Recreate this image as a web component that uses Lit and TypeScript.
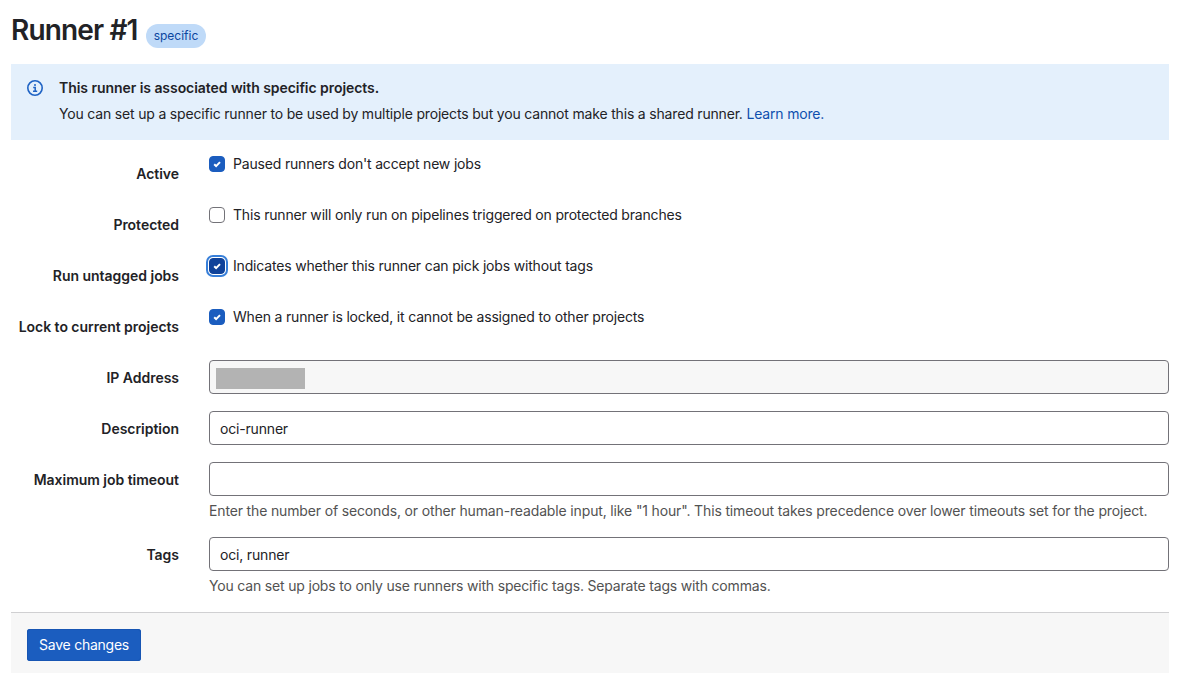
import { LitElement, html, css, svg, nothing } from "lit";
import { customElement, property } from "lit/decorators.js";
import { classMap } from "lit/directives/class-map.js";

@customElement("form-row")
class FormRow extends LitElement {
  @property() label = "";
  @property() help = "";

  static styles = css`
    :host { display: grid; grid-template-columns: 168px 960px; column-gap: 30px; min-height: 35px; margin-bottom: 16px; }
    .label { text-align: right; font-weight: 600; line-height: 20px; padding-top: 8px; letter-spacing: -0.03px; white-space: nowrap; }
    .help { color: #525252; line-height: 16px; padding: 7px 0 2px; letter-spacing: var(--ls-help, var(--ls)); white-space: nowrap; }
  `;

  render() {
    return html`
      <div class="label">${this.label}</div>
      <div>
        <slot></slot>
        ${this.help ? html`<div class="help">${this.help}</div>` : nothing}
      </div>
    `;
  }
}

@customElement("check-field")
class CheckField extends LitElement {
  @property({ type: Boolean }) checked = false;
  @property({ type: Boolean }) focused = false;

  static styles = css`
    :host { display: flex; align-items: center; gap: 8px; height: 16px; letter-spacing: var(--ls); white-space: nowrap; }
    .box { box-sizing: border-box; width: 16px; height: 16px; border: 1px solid #737278; border-radius: 4px; background: #fff; flex: none; }
    .box.checked { background: #1b5dbf; border-color: #1b5dbf; }
    .box.focused { background: #0f429a; border-color: #0f429a; box-shadow: 0 0 0 1px #fff, 0 0 0 3px #377fd9; }
    svg { display: block; width: 14px; height: 14px; }
  `;

  render() {
    return html`
      <span class=${classMap({ box: true, checked: this.checked, focused: this.focused })}>
        ${this.checked
          ? html`<svg viewBox="0 0 14 14">${svg`<path d="M4.2 7.3 6.1 9.1 10 5.1" fill="none" stroke="#fff" stroke-width="2"/>`}</svg>`
          : nothing}
      </span>
      <span><slot></slot></span>
    `;
  }
}

@customElement("app-root")
class AppRoot extends LitElement {
  static styles = css`
    :host {
      --ls: -0.179px;
      display: block; box-sizing: border-box; height: 673px; padding: 0 8px 0 11px; overflow: hidden;
      font: 14px/20px Inter, "Liberation Sans", sans-serif; color: #222226; background: #fff;
    }
    .header { display: flex; height: 64px; box-sizing: border-box; padding-top: 12px; gap: 8px; }
    h1 { margin: 0; font-size: 28px; line-height: 36px; font-weight: 600; letter-spacing: -0.85px; white-space: nowrap; width: 127px; }
    .badge { width: 60px; height: 24px; margin-top: 12px; border-radius: 12px; background: #bfdaf8; color: #0b469f; font-size: 12px; line-height: 24px; text-align: center; }
    .alert { display: flex; gap: 16px; height: 76px; box-sizing: border-box; padding: 14px 16px; background: #e4f0fc; margin-bottom: 16px; }
    .alert svg { width: 16px; height: 16px; margin-top: 2px; flex: none; }
    .alert-title { font-weight: 600; letter-spacing: -0.055px; margin-bottom: 6px; white-space: nowrap; }
    .alert-body { letter-spacing: var(--ls); white-space: nowrap; }
    .alert-body a { color: #0e4fae; text-decoration: none; }
    .timeout { --ls-help: -0.148px; }
    .input { box-sizing: border-box; height: 34px; border: 1px solid #737278; border-radius: 4px; padding: 1px 10px 0; line-height: 32px; letter-spacing: var(--ls); }
    .disabled { background: #f7f7f7; padding: 7px 6px; }
    .redacted { width: 89px; height: 21px; background: #b3b3b3; }
    .footer { box-sizing: border-box; height: 61px; border-top: 1px solid #d0d0d2; background: #f7f7f7; padding: 16px; }
    button { display: block; box-sizing: border-box; width: 114px; height: 32px; padding: 0; border: 0; border-radius: 3px; background: #1b5dbf; box-shadow: inset 0 0 0 1px #1755b3; color: #fff; font: inherit; letter-spacing: -0.25px; white-space: nowrap; }
  `;

  render() {
    return html`
      <div class="header"><h1>Runner #1</h1><span class="badge">specific</span></div>
      <div class="alert">
        <svg viewBox="0 0 16 16">
          <circle cx="8" cy="8" r="7.2" fill="none" stroke="#1f63c4" stroke-width="1.6"/>
          <circle cx="8" cy="4.9" r="1" fill="#1f63c4"/>
          <path d="M6.2 7.5H8.2V11.2M6 11.25H10.2" fill="none" stroke="#1f63c4" stroke-width="1.5"/>
        </svg>
        <div>
          <div class="alert-title">This runner is associated with specific projects.</div>
          <div class="alert-body">You can set up a specific runner to be used by multiple projects but you cannot make this a shared runner. <a>Learn more.</a></div>
        </div>
      </div>
      <form-row label="Active"><check-field checked>Paused runners don't accept new jobs</check-field></form-row>
      <form-row label="Protected"><check-field>This runner will only run on pipelines triggered on protected branches</check-field></form-row>
      <form-row label="Run untagged jobs"><check-field checked focused>Indicates whether this runner can pick jobs without tags</check-field></form-row>
      <form-row label="Lock to current projects"><check-field checked>When a runner is locked, it cannot be assigned to other projects</check-field></form-row>
      <form-row label="IP Address"><div class="input disabled"><div class="redacted"></div></div></form-row>
      <form-row label="Description"><div class="input">oci-runner</div></form-row>
      <form-row class="timeout" label="Maximum job timeout" help='Enter the number of seconds, or other human-readable input, like "1 hour". This timeout takes precedence over lower timeouts set for the project.'><div class="input"></div></form-row>
      <form-row label="Tags" help="You can set up jobs to only use runners with specific tags. Separate tags with commas."><div class="input">oci, runner</div></form-row>
      <div class="footer"><button>Save changes</button></div>
    `;
  }
}
